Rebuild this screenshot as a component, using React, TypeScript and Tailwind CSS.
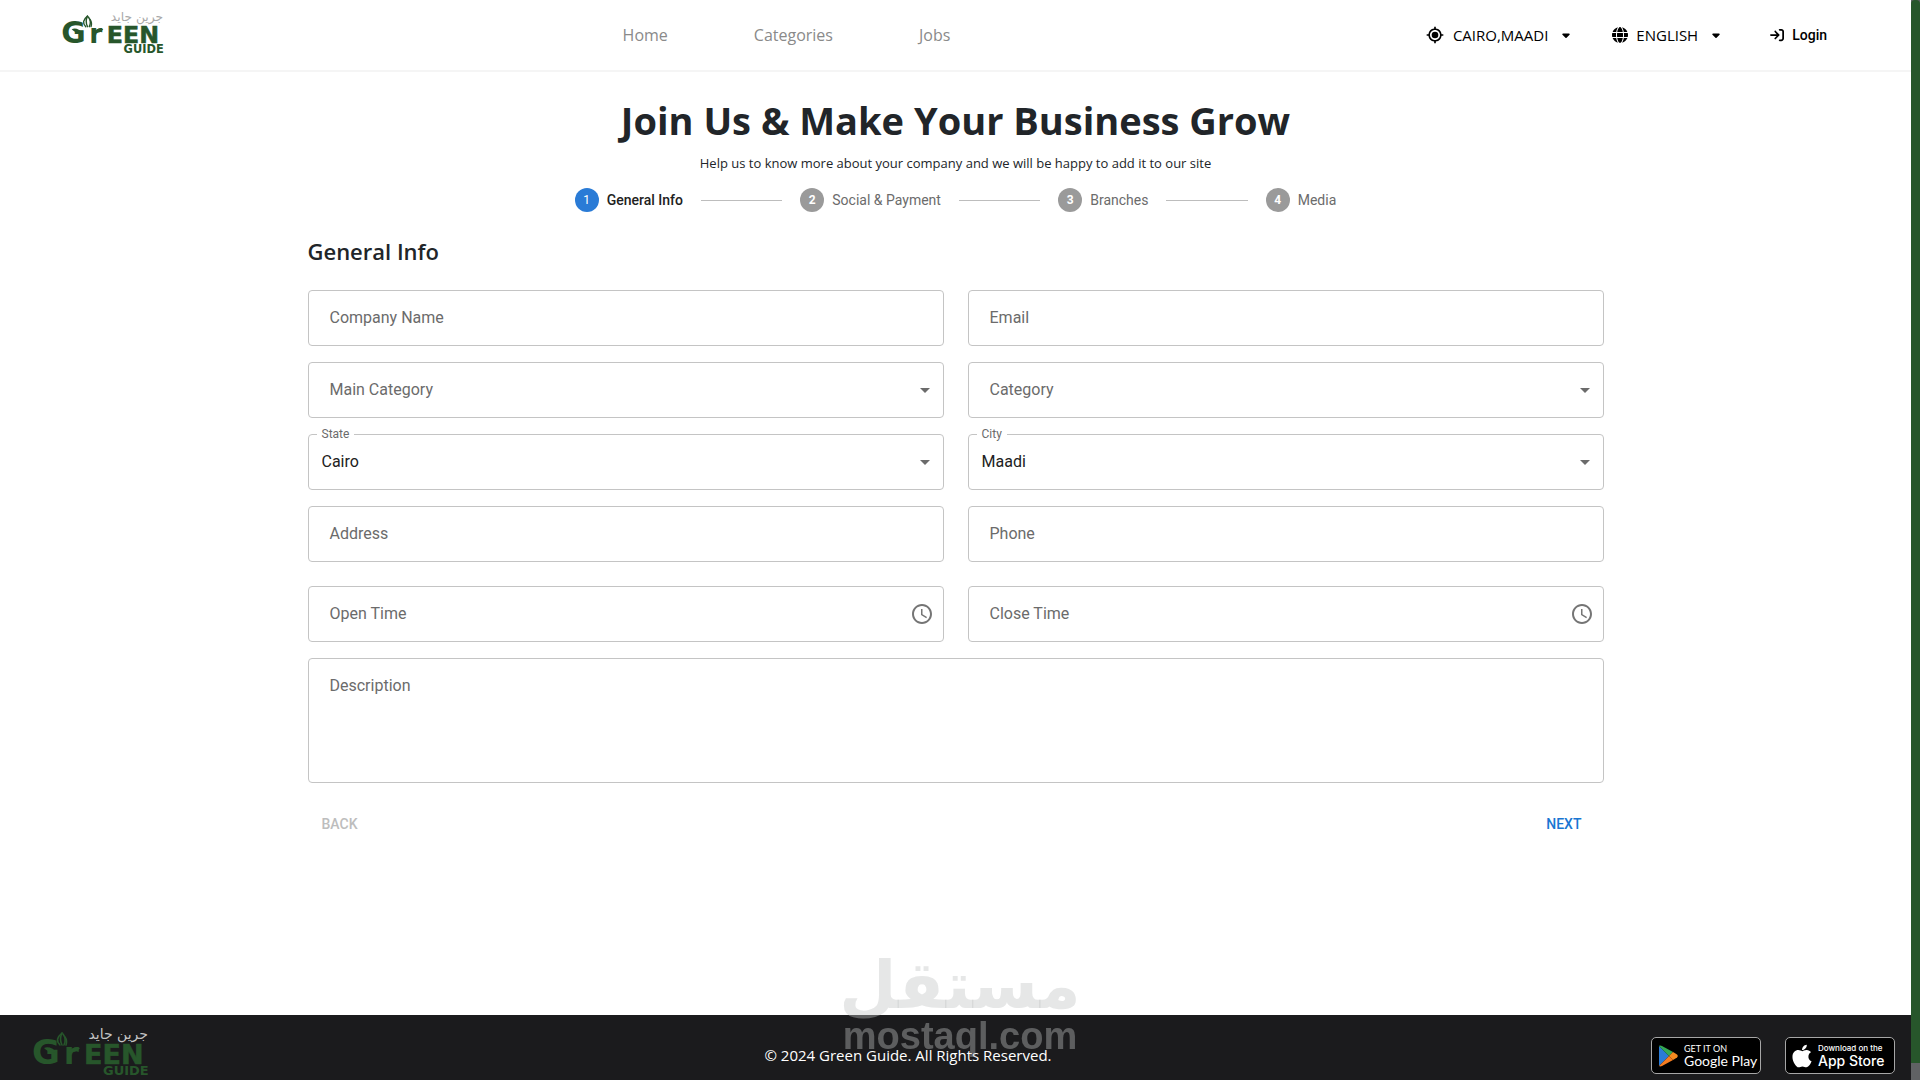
import { Fragment, useId, type ReactNode } from "react";
import { FaCaretDown, FaGlobe, FaArrowRightToBracket, FaApple } from "react-icons/fa6";
import { BiCurrentLocation } from "react-icons/bi";
import { MdAccessTime, MdArrowDropDown } from "react-icons/md";
import { clsx } from "clsx";

const navLinks = ["Home", "Categories", "Jobs"];
const steps = ["General Info", "Social & Payment", "Branches", "Media"];

type LogoProps = {
  className: string;
  arabicClassName: string;
};

function Logo({ className, arabicClassName }: LogoProps) {
  return (
    <svg
      className={clsx("overflow-visible", className)}
      viewBox="0 0 116 43"
      role="img"
      aria-label="Green Guide"
    >
      <g className="fill-[#27562b] font-['DejaVu_Sans'] font-bold">
        <text x="-1" y="31" fontSize="34">G</text>
        <text x="31" y="31" fontSize="30">r</text>
        <text x="51" y="31" fontSize="27" className="stroke-[#27562b]" strokeWidth="0.6">
          EEN
        </text>
        <text x="70" y="42" fontSize="13">GUIDE</text>
      </g>
      <text
        x="115"
        y="6"
        fontSize="14"
        direction="rtl"
        className={clsx("font-['DejaVu_Sans']", arabicClassName)}
      >
        جرين جايد
      </text>
      {/* flame leaves between the hands */}
      <g fill="none" stroke="#27562b" strokeWidth="1.6" strokeLinecap="round">
        <path d="M29 0c-5 4-6 8-2 12" />
        <path d="M29 0c-2 4-2 8 0 12" />
        <path d="M30 1c3 4 3 7 1 11" />
        <path d="M32 4c2 3 2 5 1 8" />
      </g>
      {/* the two open hands */}
      <path d="M11 15c4-2 9 0 12 4-4 1-8 0-12-4Z" fill="#27562b" />
      <path d="M47 15c-4-2-9 0-12 4 4 1 9 0 12-4Z" fill="#27562b" />
    </svg>
  );
}

type FieldProps = {
  label: string;
  value?: string;
  kind?: "text" | "select" | "time" | "textarea";
};

const controlStyles =
  "block w-full appearance-none rounded border border-[#c4c4c4] bg-transparent px-[13px] text-base text-[#212121] outline-none focus:border-[#1976d2]";

function Field({ label, value, kind = "text" }: FieldProps) {
  const id = useId();

  return (
    <div className="relative">
      {kind === "select" ? (
        <select id={id} defaultValue={value ?? ""} className={clsx(controlStyles, "h-14")}>
          <option value={value ?? ""}>{value ?? ""}</option>
        </select>
      ) : kind === "textarea" ? (
        <textarea id={id} className={clsx(controlStyles, "h-[125px] resize-none py-4")} />
      ) : (
        <input id={id} type="text" className={clsx(controlStyles, "h-14")} />
      )}

      <label
        htmlFor={id}
        className={clsx(
          "pointer-events-none absolute text-[#6b6b6b]",
          value
            ? "-top-2 left-[9px] bg-white px-[5px] text-xs"
            : "left-[22px] top-4 text-base",
        )}
      >
        {label}
      </label>

      {kind === "select" && (
        <MdArrowDropDown
          className="pointer-events-none absolute right-[7px] top-4 h-6 w-6 text-[#6b6b6b]"
          aria-hidden="true"
        />
      )}
      {kind === "time" && (
        <button
          type="button"
          aria-label={label}
          className="absolute right-[10px] top-4 text-[#757575]"
        >
          <MdAccessTime className="h-6 w-6" />
        </button>
      )}
    </div>
  );
}

function Stepper() {
  return (
    <ol className="mx-auto flex w-3/5 items-center px-2 text-sm">
      {steps.map((step, index) => (
        <Fragment key={step}>
          {index > 0 && (
            <li className="mx-[18px] mt-px h-px flex-1 bg-[#bdbdbd]" aria-hidden="true" />
          )}
          <li className="flex items-center gap-2">
            <span
              className={clsx(
                "flex h-6 w-6 items-center justify-center rounded-full text-xs text-white",
                index === 0 ? "bg-[#2a7bd6]" : "bg-[#9a9a9a] font-bold",
              )}
            >
              {index + 1}
            </span>
            <span
              className={clsx(
                "whitespace-nowrap",
                index === 0 ? "font-medium text-[#212121]" : "text-[#6b6b6b]",
              )}
            >
              {step}
            </span>
          </li>
        </Fragment>
      ))}
    </ol>
  );
}

type StoreBadgeProps = {
  icon: ReactNode;
  caption: string;
  name: string;
  captionClassName: string;
  nameClassName: string;
};

function StoreBadge({ icon, caption, name, captionClassName, nameClassName }: StoreBadgeProps) {
  return (
    <a
      href="#"
      className="flex h-[37px] w-[110px] items-center gap-[6px] rounded-[5px] border border-[#a6a6a6] bg-black pl-[6px] text-white"
    >
      {icon}
      <span className="flex flex-col whitespace-nowrap">
        <span className={clsx("leading-[11px]", captionClassName)}>{caption}</span>
        <span className={clsx("text-sm leading-[14px]", nameClassName)}>{name}</span>
      </span>
    </a>
  );
}

function PlayMark() {
  return (
    <svg className="h-[22px] w-5 flex-none" viewBox="0 0 20 22" aria-hidden="true">
      <path d="M1 1v20l10-10Z" fill="#2a7bd6" />
      <path d="M1 1c.8-.8 2-.5 3 0l11 6-4 4Z" fill="#34a853" />
      <path d="m15 7 4 2.500c1 .8 1 2.200 0 3l-4 2.500-4-4Z" fill="#f58a20" />
      <path d="m11 11 4 4-11 6c-1 .6-2.400.6-3 0Z" fill="#f57c20" />
    </svg>
  );
}

function Header() {
  return (
    <header className="flex h-[72px] items-center justify-between border-b-2 border-[#f5f5f5] pl-[62px] pr-[84px]">
      <Logo className="h-[38px] w-[102px]" arabicClassName="fill-[#a9a9a9]" />
      <nav className="flex gap-[86px] pr-4 text-base text-[#8a8a8a]">
        {navLinks.map((link) => (
          <a key={link} href="#">
            {link}
          </a>
        ))}
      </nav>
      <div className="flex items-center text-[15px] text-black">
        <button type="button" className="flex items-center gap-2">
          <BiCurrentLocation className="h-5 w-5" />
          CAIRO,MAADI
          <FaCaretDown className="ml-1 h-3 w-3" />
        </button>
        <button type="button" className="ml-10 flex items-center gap-2">
          <FaGlobe className="h-4 w-4" />
          ENGLISH
          <FaCaretDown className="ml-1 h-3 w-3" />
        </button>
        <a href="#" className="ml-12 flex items-center gap-2 font-[Roboto] text-sm font-medium">
          <FaArrowRightToBracket className="h-[14px] w-[14px]" />
          Login
        </a>
      </div>
    </header>
  );
}

function Footer() {
  return (
    <footer className="flex h-[65px] items-end justify-between bg-[#1b1b1d] pl-[33px] pr-4 text-white">
      <Logo className="mb-1 h-[43px] w-[116px]" arabicClassName="fill-[#c4c4c4]" />
      <p className="mb-[13px] pl-4 text-[15px] leading-6">© 2024 Green Guide. All Rights Reserved.</p>
      <div className="mb-[6px] flex gap-6">
        <StoreBadge
          icon={<PlayMark />}
          caption="GET IT ON"
          name="Google Play"
          captionClassName="font-[Lato] text-[9px]"
          nameClassName="font-[Lato]"
        />
        <StoreBadge
          icon={<FaApple className="h-[26px] w-5 flex-none" />}
          caption="Download on the"
          name="App Store"
          captionClassName="font-[Inter] text-[8px] font-medium"
          nameClassName="font-[Inter] font-medium"
        />
      </div>
    </footer>
  );
}

function Watermark() {
  return (
    <div
      className="pointer-events-none fixed bottom-6 left-1/2 flex -translate-x-1/2 flex-col items-center font-bold text-[#c0c4c4]/40"
      aria-hidden="true"
    >
      <span dir="rtl" className="font-['DejaVu_Sans'] text-[66px] leading-[60px]">
        مستقل
      </span>
      <span className="font-['Liberation_Sans'] text-[38px] leading-10">mostaql.com</span>
    </div>
  );
}

export default function App() {
  return (
    <div className="flex min-h-screen bg-white font-['Open_Sans',sans-serif]">
      <div className="flex min-w-0 flex-1 flex-col">
        <Header />
        <main className="mx-auto w-full max-w-[1320px] flex-1 px-3 pt-6 text-[#212529]">
          <h1 className="text-center text-[38px] leading-[48px] font-bold">
            Join Us &amp; Make Your Business Grow
          </h1>
          <p className="mt-[9px] text-center text-[13px] leading-5">
            Help us to know more about your company and we will be happy to add it to our site
          </p>
          <div className="mt-[15px] font-[Roboto]">
            <Stepper />
          </div>
          <h2 className="mt-6 text-[22px] leading-[30px] font-semibold">General Info</h2>

          <form className="mt-6 font-[Roboto]">
            <div className="grid grid-cols-2 gap-x-6 gap-y-4">
              <Field label="Company Name" />
              <Field label="Email" />
              <Field label="Main Category" kind="select" />
              <Field label="Category" kind="select" />
              <Field label="State" value="Cairo" kind="select" />
              <Field label="City" value="Maadi" kind="select" />
              <Field label="Address" />
              <Field label="Phone" />
            </div>
            <div className="mt-6 grid grid-cols-2 gap-x-6 gap-y-4">
              <Field label="Open Time" kind="time" />
              <Field label="Close Time" kind="time" />
              <div className="col-span-2">
                <Field label="Description" kind="textarea" />
              </div>
            </div>
            <div className="mt-[23px] flex justify-between px-[14px] text-sm font-medium">
              <button type="button" disabled className="py-2 text-[#bdbdbd]">
                BACK
              </button>
              <button type="button" className="px-2 py-2 text-[#1976d2]">
                NEXT
              </button>
            </div>
          </form>
        </main>
        <Footer />
      </div>
      <div className="flex w-[9px] flex-none flex-col bg-[#606264]">
        <div className="mb-[17px] flex-1 rounded-t-sm bg-[#27562b]" />
      </div>
      <Watermark />
    </div>
  );
}
